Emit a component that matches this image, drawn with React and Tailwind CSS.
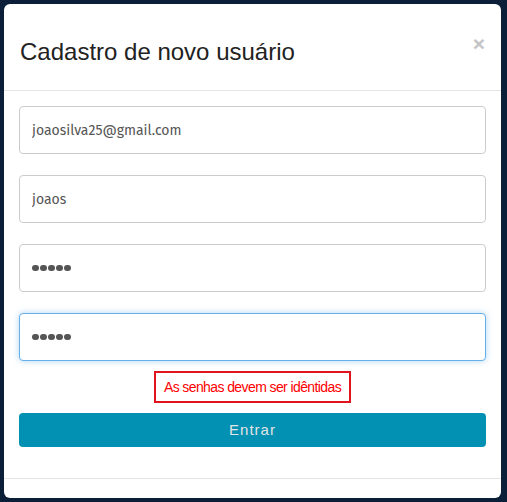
import React from 'react';

const inputCls =
  "w-full h-12 rounded border border-[#ccc] bg-white px-3 text-[14px] text-[#555] outline-none";

const Dots = () => (
  <div className="flex gap-[1.5px]">
    {[0, 1, 2, 3, 4].map((i) => (
      <span key={i} className="w-[6.5px] h-[6.5px] rounded-full bg-[#555]" />
    ))}
  </div>
);

export default function App() {
  return (
    <div className="w-[507px] h-[502px] bg-[#0b2038] p-1 overflow-hidden" style={{ fontFamily: '"Liberation Sans", Arial, sans-serif' }}>
      <div className="h-[494px] w-[497px] bg-white rounded-md flex flex-col">
        <div className="relative h-[87px] border-b border-[#e5e5e5] flex items-center px-4">
          <h1 className="text-[24px] text-[#222] pt-[10px]">Cadastro de novo usuário</h1>
          <span className="absolute right-[16px] top-[29px] text-[21px] font-bold text-[#c4c4c4] leading-none">×</span>
        </div>
        <div className="px-[15px] pt-[15px] pb-[31px] flex flex-col" style={{ fontFamily: '"Fira Sans", Lato, sans-serif' }}>
          <input className={inputCls} defaultValue="joaosilva25@gmail.com" readOnly />
          <input className={inputCls + " mt-[21px]"} defaultValue="joaos" readOnly />
          <div className="mt-[21px] w-full h-12 rounded border border-[#ccc] bg-white px-3 flex items-center">
            <Dots />
          </div>
          <div className="mt-[21px] w-full h-12 rounded border border-[#66afe9] bg-white px-3 flex items-center shadow-[0_0_6px_rgba(102,175,233,0.5)]">
            <Dots />
          </div>
          <div className="mt-[10px] flex justify-center">
            <div className="border-2 border-[#e0141e] px-[8px] h-[32px] flex items-center text-[14px] tracking-[-0.6px] text-[#f00]" style={{ fontFamily: '"Liberation Sans", Arial, sans-serif' }}>
              As senhas devem ser idêntidas
            </div>
          </div>
          <button className="mt-[10px] h-[34px] w-full rounded bg-[#0291b3] text-[#e4e4e4] text-[15px] tracking-[1px]" style={{ fontFamily: '"Liberation Sans", Arial, sans-serif' }}>
            Entrar
          </button>
        </div>
        <div className="border-t border-[#e5e5e5] flex-1" />
      </div>
    </div>
  );
}
